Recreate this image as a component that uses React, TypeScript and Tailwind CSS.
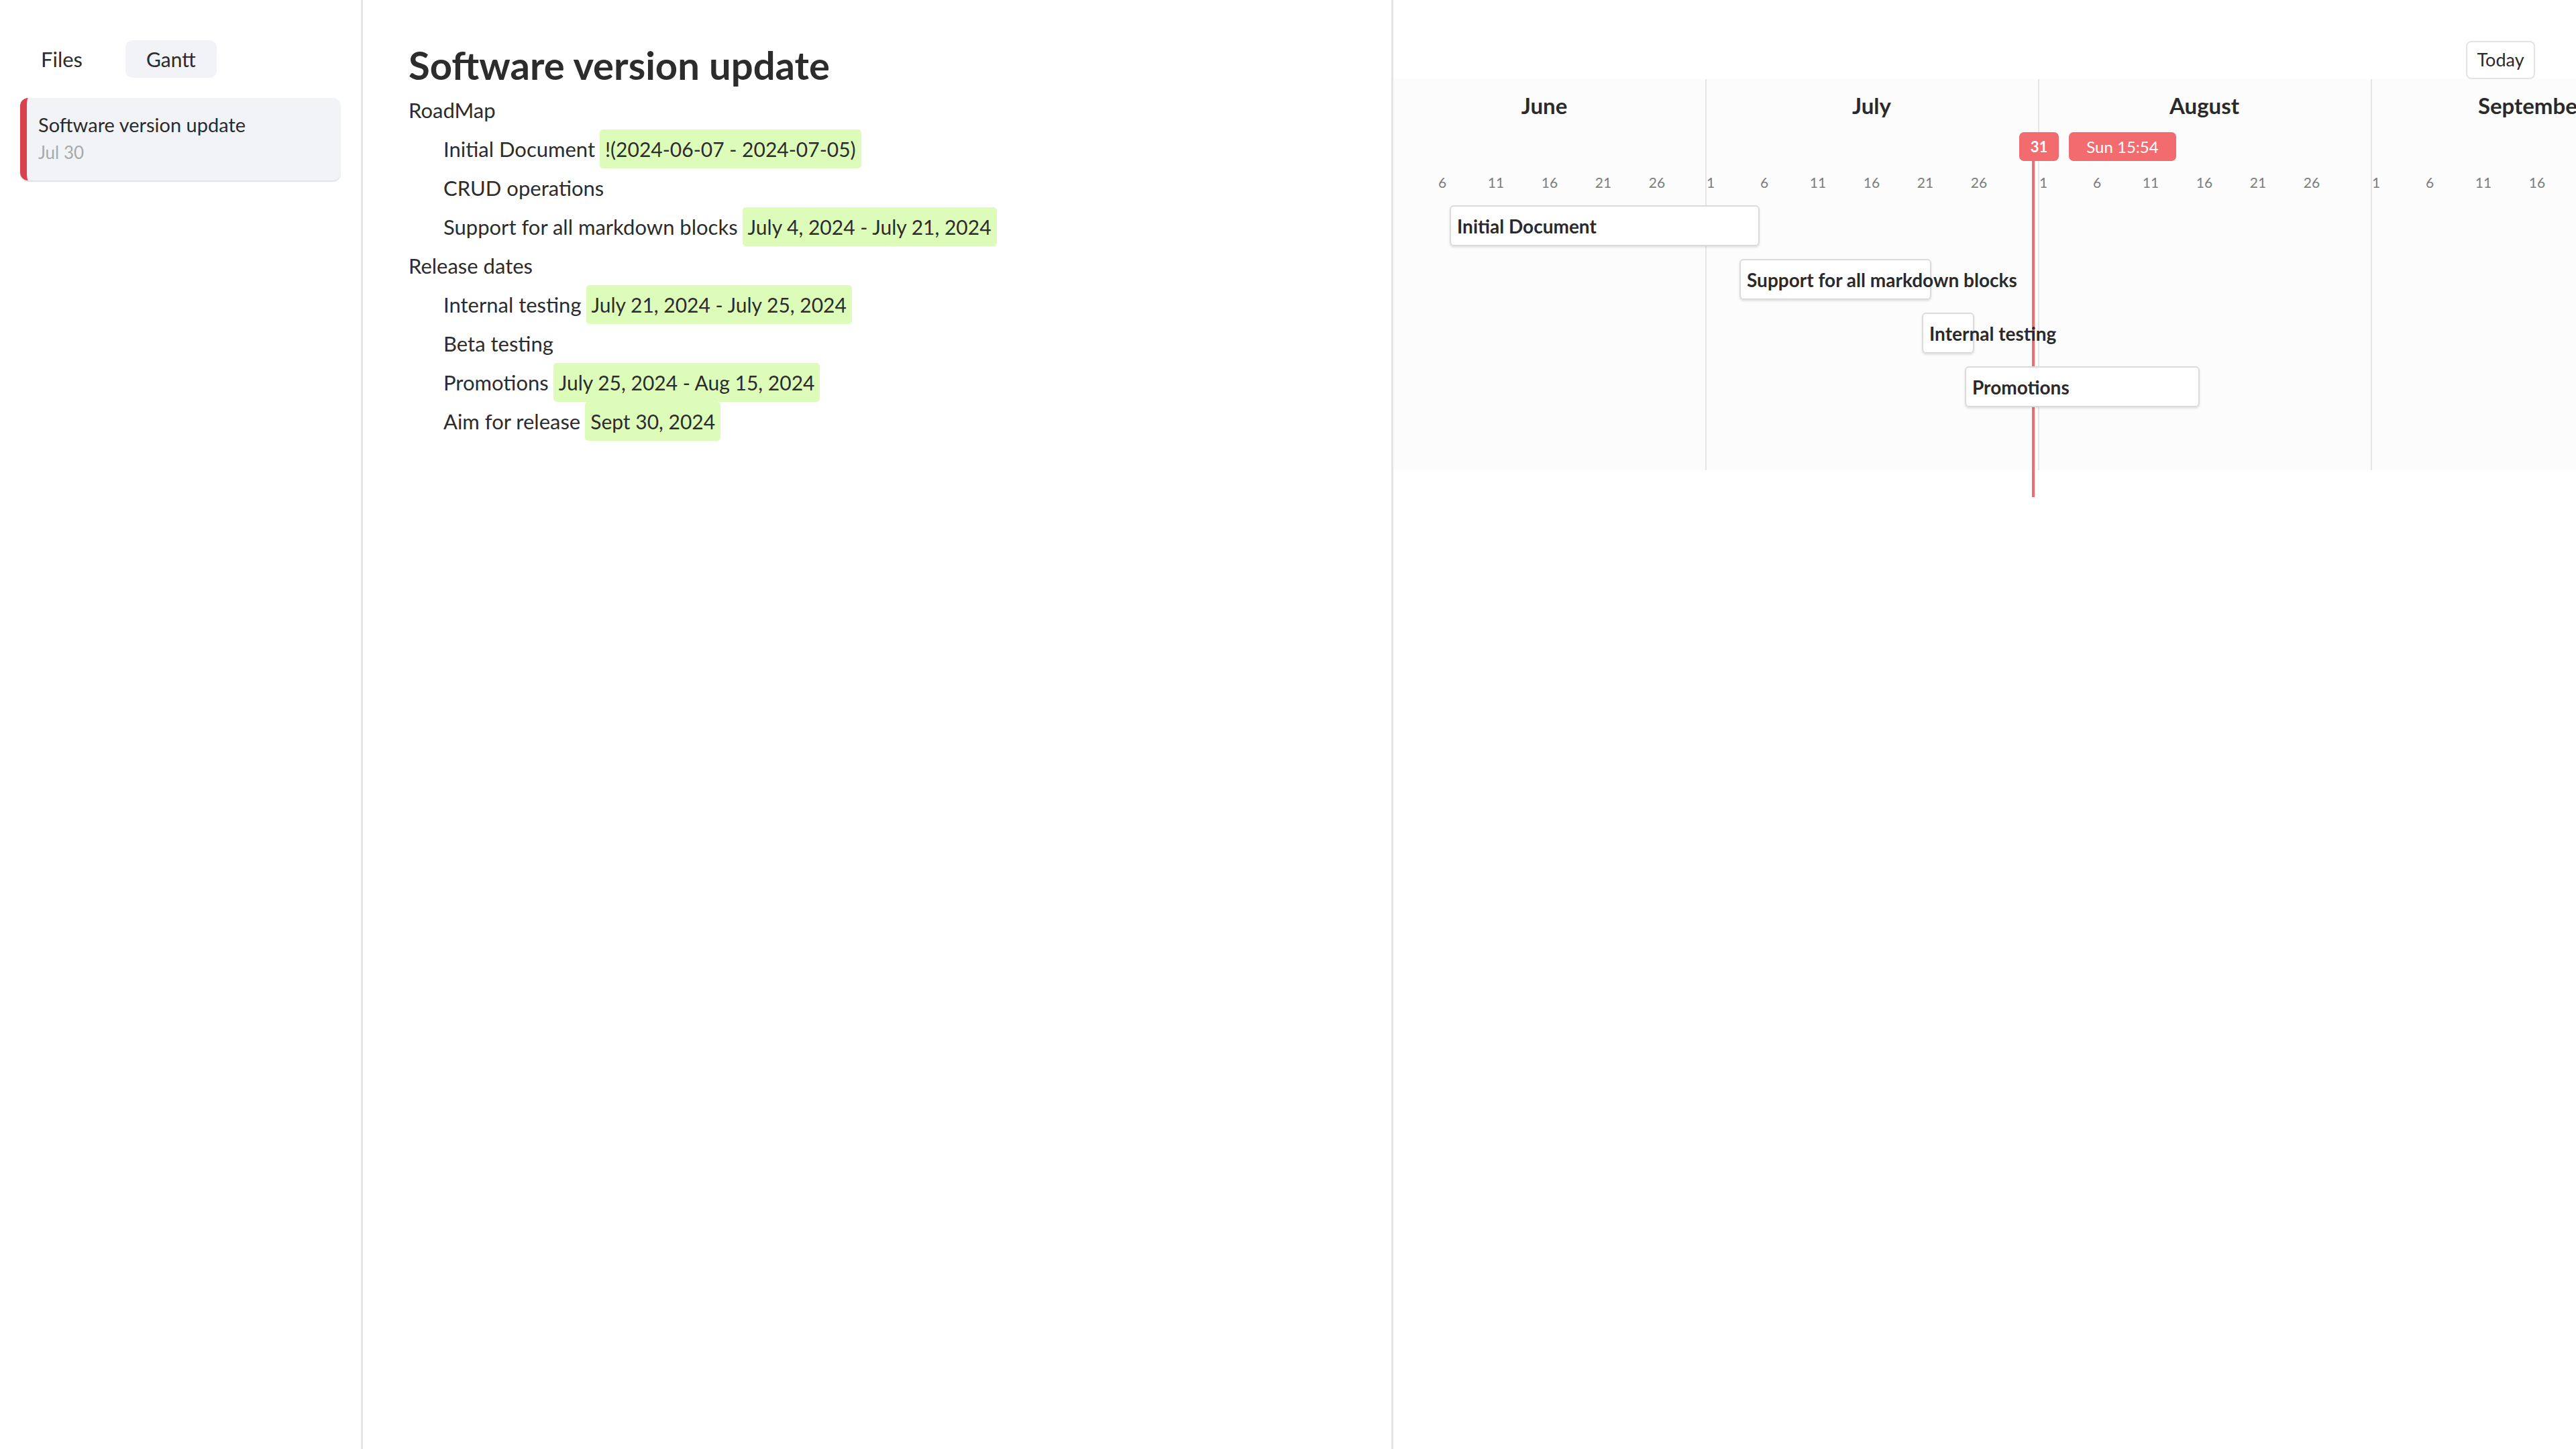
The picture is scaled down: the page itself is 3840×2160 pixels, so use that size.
import React from "react";

interface Month {
  name: string;
  days: number;
  offset: number;
  width: string;
}

interface Task {
  title: string;
  start: [number, number];
  end: [number, number];
}

const DAY = 16;
// x of June 1st inside the chart (the chart is scrolled a bit)
const ORIGIN = -15;

const months: Month[] = [
  { name: "June", days: 30, offset: 0, width: "w-[480px]" },
  { name: "July", days: 31, offset: 30, width: "w-[496px]" },
  { name: "August", days: 31, offset: 61, width: "w-[496px]" },
  { name: "September", days: 30, offset: 92, width: "w-[480px]" },
];

const ticks = [1, 6, 11, 16, 21, 26];

const tasks: Task[] = [
  { title: "Initial Document", start: [0, 7], end: [1, 5] },
  { title: "Support for all markdown blocks", start: [1, 4], end: [1, 21] },
  { title: "Internal testing", start: [1, 21], end: [1, 25] },
  { title: "Promotions", start: [1, 25], end: [2, 15] },
];

const dayIndex = ([m, d]: [number, number]) => months[m].offset + d - 1;

// skip ticks whose label would sit under the left edge of the scrolled chart
const visible = (m: Month, d: number) => ORIGIN + (m.offset + d - 1) * DAY + DAY / 2 > 12;

interface Line {
  text: string;
  date?: string;
  level: 0 | 1;
}

const lines: Line[] = [
  { text: "RoadMap", level: 0 },
  { text: "Initial Document", date: "!(2024-06-07 - 2024-07-05)", level: 1 },
  { text: "CRUD operations", level: 1 },
  { text: "Support for all markdown blocks", date: "July 4, 2024 - July 21, 2024", level: 1 },
  { text: "Release dates", level: 0 },
  { text: "Internal testing", date: "July 21, 2024 - July 25, 2024", level: 1 },
  { text: "Beta testing", level: 1 },
  { text: "Promotions", date: "July 25, 2024 - Aug 15, 2024", level: 1 },
  { text: "Aim for release", date: "Sept 30, 2024", level: 1 },
];

const Sidebar: React.FC = () => (
  <aside className="flex w-[541px] shrink-0 flex-col border-r-[3px] border-[#e4e4e4] px-[30px] pt-[60px]">
    <div className="flex gap-[33px]">
      <button className="flex h-[56px] items-center rounded-[10px] px-[31px] text-[31px] text-[#2b2b2b]">
        Files
      </button>
      <button className="flex h-[56px] items-center rounded-[10px] bg-[#f2f3f6] px-[31px] text-[30px] text-[#2b2b2b]">
        Gantt
      </button>
    </div>
    <div className="mt-[30px] flex h-[123px] flex-col rounded-[12px] border-l-[10px] border-[#d8434b] bg-[#f2f3f7] pl-[17px] pt-[22px] shadow-[0_2px_1px_#e2e2e4]">
      <div className="text-[29px] leading-[36px] text-[#2b2b2b]">Software version update</div>
      <div className="mt-[8px] text-[26px] leading-[30px] text-[#a9a9a9]">Jul 30</div>
    </div>
  </aside>
);

const Editor: React.FC = () => (
  <main className="flex w-[1536px] shrink-0 flex-col border-r-[3px] border-[#e4e4e4] pl-[68px] pt-[63px] text-[#2c2c2c]">
    <h1 className="h-[68px] text-[58px] font-bold leading-[68px]">Software version update</h1>
    <div className="mt-[4px] flex flex-col">
      {lines.map((l) => (
        <div
          key={l.text}
          className={`flex h-[58px] items-center text-[31px] ${l.level === 1 ? "pl-[52px]" : ""}`}
        >
          <span>{l.text}</span>
          {l.date && (
            <span className="ml-[7px] flex h-[58px] items-center rounded-[5px] bg-[#defcb9] px-[8px] text-[30px]">
              {l.date}
            </span>
          )}
        </div>
      ))}
    </div>
  </main>
);

const Gantt: React.FC = () => (
  <section className="relative flex min-w-0 flex-1 flex-col">
    <div className="flex h-[118px] items-end justify-end pr-[61px]">
      <button className="flex h-[57px] w-[103px] items-center justify-center rounded-[8px] border-2 border-[#e3e3e3] bg-white text-[27px] text-[#2b2b2b]">
        Today
      </button>
    </div>

    <div className="h-[583px] min-w-0 overflow-hidden bg-[#fcfcfc]">
      <div className="ml-[-15px] flex h-full">
        {months.map((m) => (
          <div
            key={m.name}
            className={`flex h-full shrink-0 flex-col shadow-[inset_2px_0_0_#e6e6e6] ${m.width}`}
          >
            <div className="flex h-[80px] items-center justify-center whitespace-nowrap text-[33px] font-bold text-[#2a2a2a]">
              {m.name}
            </div>
            <div className="h-[56px]" />
            <div className="flex h-[36px] items-center">
              {Array.from({ length: m.days }, (_, i) => i + 1).map((d) => (
                <div key={d} className="flex w-[16px] shrink-0 justify-center">
                  {ticks.includes(d) && visible(m, d) && (
                    <span className="whitespace-nowrap text-[21px] text-[#7d7d7d]">{d}</span>
                  )}
                </div>
              ))}
            </div>
          </div>
        ))}
      </div>
    </div>

    {/* today marker */}
    <div className="absolute left-[952px] top-[236px] h-[505px] w-[4px] bg-[#f26b6f]" />
    <div className="absolute left-[933px] top-[197px] flex gap-[15px]">
      <span className="flex h-[43px] w-[59px] items-center justify-center rounded-[7px] bg-[#f26b6f] text-[22px] font-bold text-white">
        31
      </span>
      <span className="flex h-[43px] w-[160px] items-center justify-center rounded-[7px] bg-[#f26b6f] text-[24px] text-white">
        Sun 15:54
      </span>
    </div>

    {tasks.map((t, i) => {
      const s = dayIndex(t.start);
      const e = dayIndex(t.end) + 1;
      return (
        <div
          key={t.title}
          className="absolute flex h-[61px] items-center whitespace-nowrap rounded-[6px] border-2 border-[#dadada] bg-white px-[9px] text-[28px] font-bold text-[#2a2a2a] shadow-[0_2px_3px_rgba(0,0,0,0.1)]"
          style={{
            left: ORIGIN + s * DAY + 3,
            width: (e - s) * DAY - 2,
            top: 306 + i * 80,
          }}
        >
          {t.title}
        </div>
      );
    })}
  </section>
);

export default function App() {
  return (
    <div className="flex h-screen w-full overflow-hidden bg-white font-['Lato','Liberation_Sans',sans-serif]">
      <Sidebar />
      <Editor />
      <Gantt />
    </div>
  );
}
